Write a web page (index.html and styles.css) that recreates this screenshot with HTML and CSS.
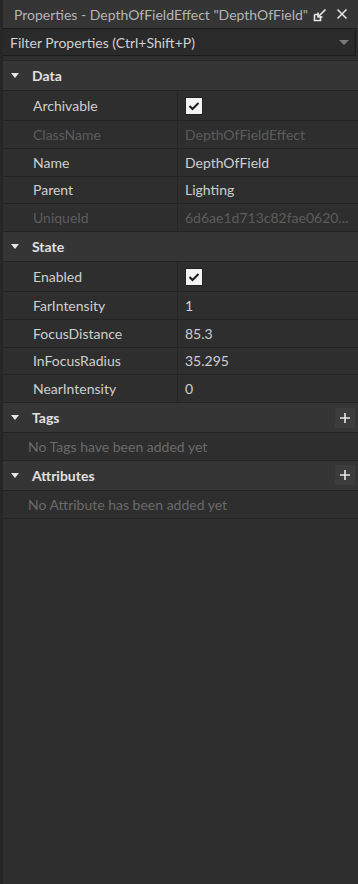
FILE: index.html
```html
<!DOCTYPE html>
<html>
<head>
<meta charset="utf-8">
<link rel="stylesheet" href="styles.css">
</head>
<body>
<div class="panel">
  <div class="titlebar">
    <span class="title">Properties - DepthOfFieldEffect "DepthOfField"</span>
    <span class="tb-icons">
      <svg class="undock" width="14" height="14" viewBox="0 0 14 14">
        <path d="M1.5 6.5 H6 M1.5 6.5 V12.5 H7.5 V8" fill="none" stroke="#e8e8e8" stroke-width="1.6"/>
        <path d="M12.5 1.5 L6 8" fill="none" stroke="#e8e8e8" stroke-width="1.6"/>
        <path d="M5 4.5 V9 H9.5" fill="none" stroke="#e8e8e8" stroke-width="1.6"/>
      </svg>
      <svg class="close" width="12" height="12" viewBox="0 0 12 12">
        <path d="M1.5 1.5 L10.5 10.5 M10.5 1.5 L1.5 10.5" stroke="#e8e8e8" stroke-width="1.5"/>
      </svg>
    </span>
  </div>
  <div class="filter">
    <span class="filter-text">Filter Properties (Ctrl+Shift+P)</span>
    <span class="filter-arrow"></span>
  </div>

  <div class="list">
    <div class="header"><span class="tri"></span><span class="htext">Data</span></div>
    <div class="row tall"><span class="label">Archivable</span><span class="value"><span class="check"><svg width="12" height="10" viewBox="0 0 12 10"><path d="M1.5 5 L4.5 8 L10.5 2" fill="none" stroke="#1a1a1a" stroke-width="2"/></svg></span></span></div>
    <div class="row dim"><span class="label">ClassName</span><span class="value">DepthOfFieldEffect</span></div>
    <div class="row"><span class="label">Name</span><span class="value">DepthOfField</span></div>
    <div class="row"><span class="label">Parent</span><span class="value">Lighting</span></div>
    <div class="row dim"><span class="label">UniqueId</span><span class="value">6d6ae1d713c82fae0620...</span></div>

    <div class="header"><span class="tri"></span><span class="htext">State</span></div>
    <div class="row tall"><span class="label">Enabled</span><span class="value"><span class="check"><svg width="12" height="10" viewBox="0 0 12 10"><path d="M1.5 5 L4.5 8 L10.5 2" fill="none" stroke="#1a1a1a" stroke-width="2"/></svg></span></span></div>
    <div class="row"><span class="label">FarIntensity</span><span class="value">1</span></div>
    <div class="row"><span class="label">FocusDistance</span><span class="value">85.3</span></div>
    <div class="row"><span class="label">InFocusRadius</span><span class="value">35.295</span></div>
    <div class="row"><span class="label">NearIntensity</span><span class="value">0</span></div>

    <div class="header"><span class="tri"></span><span class="htext">Tags</span><span class="plus"><svg width="10" height="10" viewBox="0 0 10 10"><path d="M5 0 V10 M0 5 H10" stroke="#e8e8e8" stroke-width="1.6"/></svg></span></div>
    <div class="empty">No Tags have been added yet</div>

    <div class="header"><span class="tri"></span><span class="htext">Attributes</span><span class="plus"><svg width="10" height="10" viewBox="0 0 10 10"><path d="M5 0 V10 M0 5 H10" stroke="#e8e8e8" stroke-width="1.6"/></svg></span></div>
    <div class="empty">No Attribute has been added yet</div>
  </div>
</div>
</body>
</html>
```
FILE: styles.css
```css
html, body {
  margin: 0;
  padding: 0;
  background: #2e2e2e;
  height: 100%;
}
body {
  font-family: "Lato", "Open Sans", sans-serif;
  font-size: 14px;
  color: #cccccc;
}
.panel {
  width: 358px;
  height: 884px;
  background: #2e2e2e;
  border-left: 3px solid #262626;
  box-sizing: border-box;
  overflow: hidden;
}
.titlebar {
  height: 28px;
  margin-left: -3px;
  background: #353535;
  display: flex;
  align-items: center;
  padding-left: 14px;
  padding-right: 10px;
}
.title {
  color: #b4b4b4;
  font-size: 14px;
  flex: 1;
  white-space: nowrap;
}
.tb-icons {
  display: flex;
  align-items: center;
  gap: 9px;
}
.undock { margin-top: 1px; }
.filter {
  height: 28px;
  margin-left: -1px;
  margin-right: 2px;
  background: #2a2a2a;
  border: 1px solid #1b1b1b;
  box-sizing: border-box;
  display: flex;
  align-items: center;
  padding-left: 7px;
  padding-right: 6px;
}
.filter-text {
  flex: 1;
  color: #d0d0d0;
  font-size: 14px;
}
.filter-arrow {
  width: 0;
  height: 0;
  border-left: 5px solid transparent;
  border-right: 5px solid transparent;
  border-top: 5px solid #7a7a7a;
}
.list {
  margin-top: 4px;
  border-top: 1px solid #262626;
}
.header {
  height: 29px;
  background: #353535;
  border-bottom: 1px solid #232323;
  display: flex;
  align-items: center;
  padding-left: 8px;
  padding-right: 3px;
}
.tri {
  width: 0;
  height: 0;
  border-left: 4.5px solid transparent;
  border-right: 4.5px solid transparent;
  border-top: 5px solid #e6e6e6;
  margin-right: 13px;
}
.htext {
  font-weight: bold;
  color: #e0e0e0;
  flex: 1;
}
.plus {
  width: 20px;
  height: 20px;
  background: #3c3c3c;
  display: flex;
  align-items: center;
  justify-content: center;
}
.row {
  height: 26.75px;
  display: flex;
  border-bottom: 1px solid #242424;
}
.row.tall { height: 29px; }
.label {
  width: 175px;
  padding-left: 30px;
  box-sizing: border-box;
  border-right: 1px solid #262626;
  display: flex;
  align-items: center;
  color: #cfcfcf;
}
.value {
  flex: 1;
  padding-left: 7px;
  display: flex;
  align-items: center;
  color: #cfcfcf;
  white-space: nowrap;
  overflow: hidden;
}
.row.dim .label, .row.dim .value { color: #5c5c5c; }
.check {
  width: 18px;
  height: 18px;
  box-sizing: border-box;
  background: #f4f4f4;
  border: 1px solid #222;
  display: flex;
  align-items: center;
  justify-content: center;
}
.empty {
  height: 26.75px;
  border-bottom: 1px solid #242424;
  display: flex;
  align-items: center;
  padding-left: 25px;
  color: #6a6a6a;
}
```
